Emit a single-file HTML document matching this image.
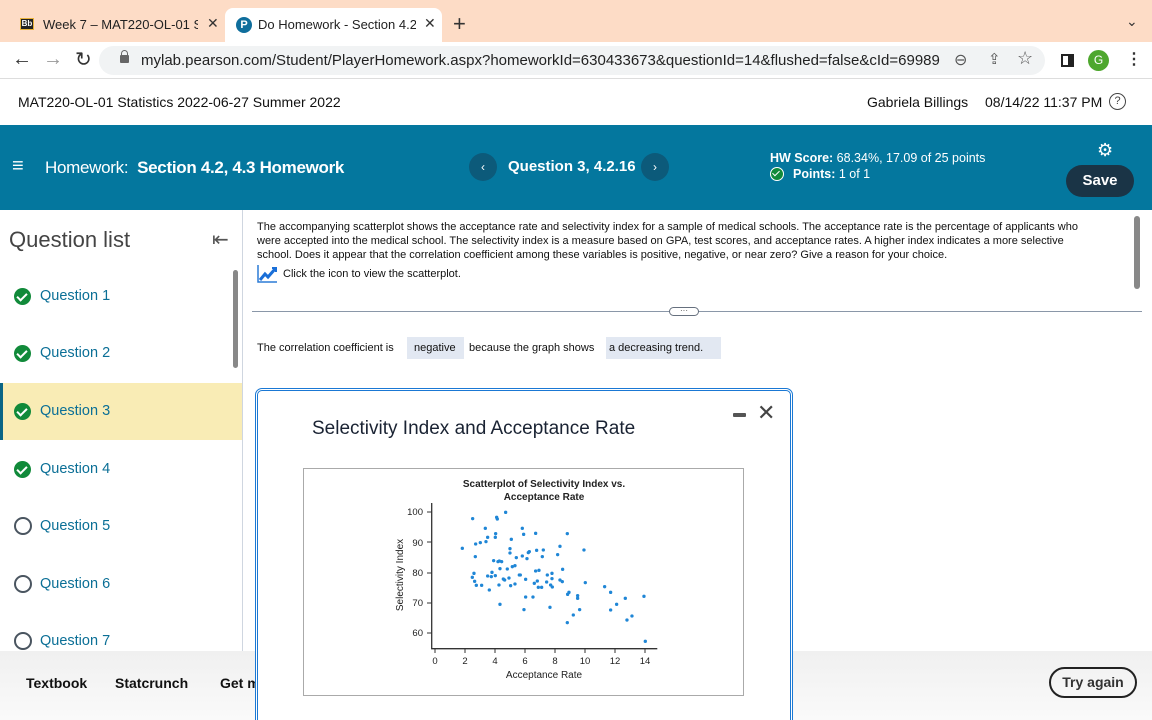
<!DOCTYPE html>
<html><head><meta charset="utf-8"><style>
*{margin:0;padding:0;box-sizing:border-box}
html,body{width:1152px;height:720px;overflow:hidden}
body{position:relative;font-family:"Liberation Sans",sans-serif;background:#fff;color:#222}
.a{position:absolute;white-space:nowrap}
.q{position:absolute;left:0;width:242px;height:57px}
.q .t{position:absolute;left:40px;top:0;line-height:57px;font-size:14.5px;color:#0b6f96}
.ck{position:absolute;left:14px;top:20px;width:17px;height:17px;border-radius:50%;background:#118a3a}
.ck:after{content:"";position:absolute;left:5px;top:3px;width:4px;height:8px;border:solid #fff;border-width:0 2px 2px 0;transform:rotate(45deg)}
.oc{position:absolute;left:14px;top:19px;width:18px;height:18px;border-radius:50%;border:2px solid #4a5560}
</style></head><body>
<!-- tab bar -->
<div class="a" style="left:0;top:0;width:1152px;height:42px;background:#fddcc6"></div>
<div class="a" style="left:20px;top:18px;width:14px;height:12px;background:#222;border:1px solid #e8b23a;color:#fff;font-size:8px;font-weight:bold;line-height:10px;text-align:center">Bb</div>
<div class="a" style="left:43px;top:17px;width:155px;overflow:hidden;font-size:13px;color:#222">Week 7 – MAT220-OL-01 Statistics</div>
<div class="a" style="left:207px;top:15px;font-size:14px;color:#333">✕</div>
<div class="a" style="left:225px;top:8px;width:217px;height:34px;background:#fff;border-radius:8px 8px 0 0"></div>
<div class="a" style="left:236px;top:17px;width:16px;height:16px;border-radius:50%;background:#0f6e9c;color:#fff;font-size:11px;font-weight:bold;text-align:center;line-height:16px">P</div>
<div class="a" style="left:258px;top:17px;width:158px;overflow:hidden;font-size:13px;color:#222">Do Homework - Section 4.2, 4.3</div>
<div class="a" style="left:424px;top:15px;font-size:14px;color:#333">✕</div>
<div class="a" style="left:453px;top:11px;font-size:22px;color:#333">+</div>
<div class="a" style="left:1126px;top:13px;font-size:14px;color:#333">⌄</div>
<!-- address row -->
<div class="a" style="left:0;top:42px;width:1152px;height:37px;background:#fff;border-bottom:1px solid #ddd"></div>
<div class="a" style="left:12px;top:48px;font-size:20px;color:#333">←</div>
<div class="a" style="left:43px;top:48px;font-size:20px;color:#999">→</div>
<div class="a" style="left:75px;top:47px;font-size:20px;color:#333">↻</div>
<div class="a" style="left:99px;top:46px;width:946px;height:29px;background:#f1f3f4;border-radius:15px"></div>
<div class="a" style="left:120px;top:55px;width:9px;height:8px;background:#666;border-radius:1px"></div>
<div class="a" style="left:121px;top:50px;width:7px;height:7px;border:1.5px solid #666;border-radius:4px 4px 0 0"></div>
<div class="a" style="left:141px;top:52px;width:800px;overflow:hidden;font-size:15px;color:#222">mylab.pearson.com/Student/PlayerHomework.aspx?homeworkId=630433673&amp;questionId=14&amp;flushed=false&amp;cId=69989...</div>
<div class="a" style="left:954px;top:50px;font-size:16px;color:#555">⊖</div>
<div class="a" style="left:988px;top:50px;font-size:15px;color:#555">⇪</div>
<div class="a" style="left:1017px;top:48px;font-size:18px;color:#555">☆</div>
<div class="a" style="left:1061px;top:54px;width:13px;height:13px;border:2px solid #222;border-right-width:6px"></div>
<div class="a" style="left:1088px;top:50px;width:21px;height:21px;border-radius:50%;background:#4ea72e;color:#fff;font-size:12px;text-align:center;line-height:21px">G</div>
<div class="a" style="left:1126px;top:49px;font-size:16px;color:#333;font-weight:bold">⋮</div>
<!-- course header -->
<div class="a" style="left:18px;top:94px;font-size:14px;color:#111">MAT220-OL-01 Statistics 2022-06-27 Summer 2022</div>
<div class="a" style="left:867px;top:94px;font-size:14px;color:#111">Gabriela Billings</div>
<div class="a" style="left:985px;top:94px;font-size:14px;color:#111">08/14/22 11:37 PM</div>
<div class="a" style="left:1109px;top:93px;width:17px;height:17px;border:1.5px solid #444;border-radius:50%;font-size:11px;text-align:center;line-height:14px;color:#444">?</div>
<!-- blue band -->
<div class="a" style="left:0;top:125px;width:1152px;height:85px;background:#04779e"></div>
<div class="a" style="left:12px;top:155px;font-size:20px;color:#fff">≡</div>
<div class="a" style="left:45px;top:158px;font-size:17px;color:#fff;letter-spacing:-0.3px">Homework: <b>&nbsp;Section 4.2, 4.3 Homework</b></div>
<div class="a" style="left:469px;top:153px;width:28px;height:28px;border-radius:50%;background:#0c5a7a;color:#fff;font-size:12px;text-align:center;line-height:28px">‹</div>
<div class="a" style="left:508px;top:158px;font-size:15px;color:#fff;font-weight:bold">Question 3, 4.2.16</div>
<div class="a" style="left:641px;top:153px;width:28px;height:28px;border-radius:50%;background:#0c5a7a;color:#fff;font-size:12px;text-align:center;line-height:28px">›</div>
<div class="a" style="left:770px;top:151px;font-size:12.5px;color:#fff"><b>HW Score:</b> 68.34%, 17.09 of 25 points</div>
<div class="a" style="left:770px;top:167px;width:14px;height:14px;border-radius:50%;background:#118a3a;border:1.5px solid #fff"></div>
<div class="a" style="left:774px;top:169px;width:4px;height:7px;border:solid #fff;border-width:0 1.5px 1.5px 0;transform:rotate(45deg)"></div>
<div class="a" style="left:793px;top:167px;font-size:12.5px;color:#fff"><b>Points:</b> 1 of 1</div>
<div class="a" style="left:1097px;top:140px;font-size:18px;color:#fff">⚙</div>
<div class="a" style="left:1066px;top:165px;width:68px;height:32px;border-radius:16px;background:#1a3446;color:#fff;font-size:15px;font-weight:bold;text-align:center;line-height:32px">Save</div>
<!-- sidebar -->
<div class="a" style="left:242px;top:210px;width:1px;height:441px;background:#cfd6e0"></div>
<div class="a" style="left:9px;top:227px;font-size:22px;color:#444">Question list</div>
<div class="a" style="left:212px;top:227px;font-size:20px;color:#555">⇤</div>
<div class="a" style="left:233px;top:270px;width:5px;height:98px;border-radius:3px;background:#888"></div>
<div class="q" style="top:268px"><div class="ck"></div><div class="t">Question 1</div></div>
<div class="q" style="top:325px"><div class="ck"></div><div class="t">Question 2</div></div>
<div class="q" style="top:383px;background:#f9ecb5;border-left:3px solid #0b6585"><div class="ck" style="left:11px"></div><div class="t" style="left:37px">Question 3</div></div>
<div class="q" style="top:441px"><div class="ck"></div><div class="t">Question 4</div></div>
<div class="q" style="top:498px"><div class="oc"></div><div class="t">Question 5</div></div>
<div class="q" style="top:556px"><div class="oc"></div><div class="t">Question 6</div></div>
<div class="q" style="top:613px"><div class="oc"></div><div class="t">Question 7</div></div>
<!-- content -->
<div class="a" style="left:257px;top:220px;width:878px;font-size:11px;line-height:14px;white-space:normal;color:#111">The accompanying scatterplot shows the acceptance rate and selectivity index for a sample of medical schools. The acceptance rate is the percentage of applicants who<br>were accepted into the medical school. The selectivity index is a measure based on GPA, test scores, and acceptance rates. A higher index indicates a more selective<br>school. Does it appear that the correlation coefficient among these variables is positive, negative, or near zero? Give a reason for your choice.</div>
<div class="a" style="left:1134px;top:216px;width:6px;height:73px;border-radius:3px;background:#888"></div>
<svg class="a" style="left:257px;top:264px" width="22" height="20"><path d="M1 1V18H20" stroke="#2b7bd6" stroke-width="1.5" fill="none"/><path d="M3 16L8 10L11 13L18 5" stroke="#1a6fd8" stroke-width="3" fill="none"/><path d="M15 4H19V8" stroke="#1a6fd8" stroke-width="2" fill="none"/></svg>
<div class="a" style="left:283px;top:268px;font-size:11px;color:#111">Click the icon to view the scatterplot.</div>
<div class="a" style="left:252px;top:311px;width:890px;height:1px;background:#8a97a8"></div>
<div class="a" style="left:669px;top:307px;width:30px;height:9px;border:1px solid #66707e;border-radius:5px;background:#fff;font-size:8px;line-height:5px;text-align:center;color:#444">···</div>
<div class="a" style="left:257px;top:342px;font-size:11px;color:#111">The correlation coefficient is</div>
<div class="a" style="left:407px;top:337px;width:57px;height:22px;background:#e2e8f2"></div>
<div class="a" style="left:414px;top:342px;font-size:11px;color:#111">negative</div>
<div class="a" style="left:469px;top:342px;font-size:11px;color:#111">because the graph shows</div>
<div class="a" style="left:606px;top:337px;width:115px;height:22px;background:#e2e8f2"></div>
<div class="a" style="left:609px;top:342px;font-size:11px;color:#111">a decreasing trend.</div>
<!-- bottom bar -->
<div class="a" style="left:0;top:651px;width:1152px;height:69px;background:linear-gradient(#f0f0f0,#fafafa)"></div>
<div class="a" style="left:26px;top:675px;font-size:14px;font-weight:bold;color:#111">Textbook</div>
<div class="a" style="left:115px;top:675px;font-size:14px;font-weight:bold;color:#111">Statcrunch</div>
<div class="a" style="left:220px;top:675px;font-size:14px;font-weight:bold;color:#111">Get m</div>
<div class="a" style="left:1049px;top:667px;width:88px;height:31px;border:2px solid #222;border-radius:16px;font-size:14px;font-weight:bold;text-align:center;line-height:27px;color:#333">Try again</div>
<!-- modal -->
<div class="a" style="left:255px;top:388px;width:538px;height:360px;border:3px double #1a78d4;border-radius:7px;background:#fff"></div>
<div class="a" style="left:312px;top:418px;font-size:19px;color:#1a2333">Selectivity Index and Acceptance Rate</div>
<div class="a" style="left:733px;top:413px;width:13px;height:4px;background:#555;border-radius:1px"></div>
<div class="a" style="left:757px;top:401px;font-size:22px;color:#444;line-height:24px">✕</div>
<div class="a" style="left:303px;top:468px;width:441px;height:228px;border:1px solid #aaa"></div>
<svg class="a" style="left:0;top:0" width="1152" height="720">
<g font-family="Liberation Sans, sans-serif" fill="#222">
<text x="544" y="487" font-size="10" font-weight="bold" text-anchor="middle">Scatterplot of Selectivity Index vs.</text>
<text x="544" y="500" font-size="10" font-weight="bold" text-anchor="middle">Acceptance Rate</text>
<text x="544" y="678" font-size="10" text-anchor="middle">Acceptance Rate</text>
<text transform="translate(403,575) rotate(-90)" font-size="10" text-anchor="middle">Selectivity Index</text>
<g font-size="9.5" text-anchor="end"><text x="423" y="515">100</text><text x="423" y="546">90</text><text x="423" y="576">80</text><text x="423" y="606">70</text><text x="423" y="636">60</text></g>
<g font-size="9.5" text-anchor="middle"><text x="435" y="664">0</text><text x="465" y="664">2</text><text x="495" y="664">4</text><text x="525" y="664">6</text><text x="555" y="664">8</text><text x="585" y="664">10</text><text x="615" y="664">12</text><text x="645" y="664">14</text></g>
</g>
<path d="M431.7 503V648.7H657.3" stroke="#333" stroke-width="1.3" fill="none"/>
<g stroke="#333" stroke-width="1"><path d="M427 512h5M427 542h5M427 573h5M427 603h5M427 633h5"/><path d="M435 649v4M465 649v4M495 649v4M525 649v4M555 649v4M585 649v4M615 649v4M645 649v4"/></g>
<g fill="#1f86d6" transform="translate(300,460) scale(0.3333)">
<circle cx="487" cy="265" r="5"/><circle cx="518" cy="176" r="5"/><circle cx="527" cy="252" r="5"/><circle cx="526" cy="290" r="5"/><circle cx="522" cy="340" r="5"/><circle cx="517" cy="352" r="5"/><circle cx="524" cy="364" r="5"/><circle cx="529" cy="376" r="5"/><circle cx="545" cy="376" r="5"/><circle cx="541" cy="248" r="5"/><circle cx="556" cy="205" r="5"/><circle cx="558" cy="245" r="5"/><circle cx="563" cy="232" r="5"/><circle cx="563" cy="348" r="5"/><circle cx="568" cy="390" r="5"/><circle cx="574" cy="350" r="5"/><circle cx="576" cy="337" r="5"/><circle cx="581" cy="302" r="5"/><circle cx="586" cy="232" r="5"/><circle cx="587" cy="221" r="5"/><circle cx="586" cy="347" r="5"/><circle cx="590" cy="172" r="5"/><circle cx="592" cy="177" r="5"/><circle cx="594" cy="305" r="5"/><circle cx="598" cy="303" r="5"/><circle cx="605" cy="305" r="5"/><circle cx="597" cy="375" r="5"/><circle cx="600" cy="326" r="5"/><circle cx="600" cy="433" r="5"/><circle cx="610" cy="357" r="5"/><circle cx="614" cy="360" r="5"/><circle cx="617" cy="157" r="5"/><circle cx="622" cy="327" r="5"/><circle cx="627" cy="354" r="5"/><circle cx="630" cy="266" r="5"/><circle cx="630" cy="279" r="5"/><circle cx="632" cy="377" r="5"/><circle cx="634" cy="238" r="5"/><circle cx="637" cy="320" r="5"/><circle cx="645" cy="317" r="5"/><circle cx="645" cy="372" r="5"/><circle cx="649" cy="293" r="5"/><circle cx="658" cy="345" r="5"/><circle cx="661" cy="345" r="5"/><circle cx="667" cy="205" r="5"/><circle cx="667" cy="288" r="5"/><circle cx="671" cy="223" r="5"/><circle cx="672" cy="449" r="5"/><circle cx="677" cy="358" r="5"/><circle cx="677" cy="411" r="5"/><circle cx="681" cy="296" r="5"/><circle cx="685" cy="278" r="5"/><circle cx="688" cy="275" r="5"/><circle cx="699" cy="411" r="5"/><circle cx="703" cy="370" r="5"/><circle cx="707" cy="220" r="5"/><circle cx="707" cy="333" r="5"/><circle cx="710" cy="271" r="5"/><circle cx="712" cy="363" r="5"/><circle cx="715" cy="382" r="5"/><circle cx="717" cy="331" r="5"/><circle cx="725" cy="382" r="5"/><circle cx="727" cy="290" r="5"/><circle cx="730" cy="270" r="5"/><circle cx="740" cy="366" r="5"/><circle cx="742" cy="345" r="5"/><circle cx="750" cy="442" r="5"/><circle cx="752" cy="375" r="5"/><circle cx="756" cy="340" r="5"/><circle cx="756" cy="356" r="5"/><circle cx="757" cy="381" r="5"/><circle cx="773" cy="284" r="5"/><circle cx="780" cy="259" r="5"/><circle cx="780" cy="360" r="5"/><circle cx="787" cy="365" r="5"/><circle cx="788" cy="328" r="5"/><circle cx="802" cy="488" r="5"/><circle cx="802" cy="221" r="5"/><circle cx="803" cy="403" r="5"/><circle cx="807" cy="397" r="5"/><circle cx="820" cy="465" r="5"/><circle cx="833" cy="407" r="5"/><circle cx="833" cy="415" r="5"/><circle cx="839" cy="449" r="5"/><circle cx="852" cy="270" r="5"/><circle cx="856" cy="368" r="5"/><circle cx="914" cy="380" r="5"/><circle cx="932" cy="450" r="5"/><circle cx="932" cy="397" r="5"/><circle cx="950" cy="433" r="5"/><circle cx="976" cy="415" r="5"/><circle cx="981" cy="480" r="5"/><circle cx="996" cy="468" r="5"/><circle cx="1032" cy="409" r="5"/><circle cx="1036" cy="544" r="5"/>
</g>
</svg>
</body></html>
